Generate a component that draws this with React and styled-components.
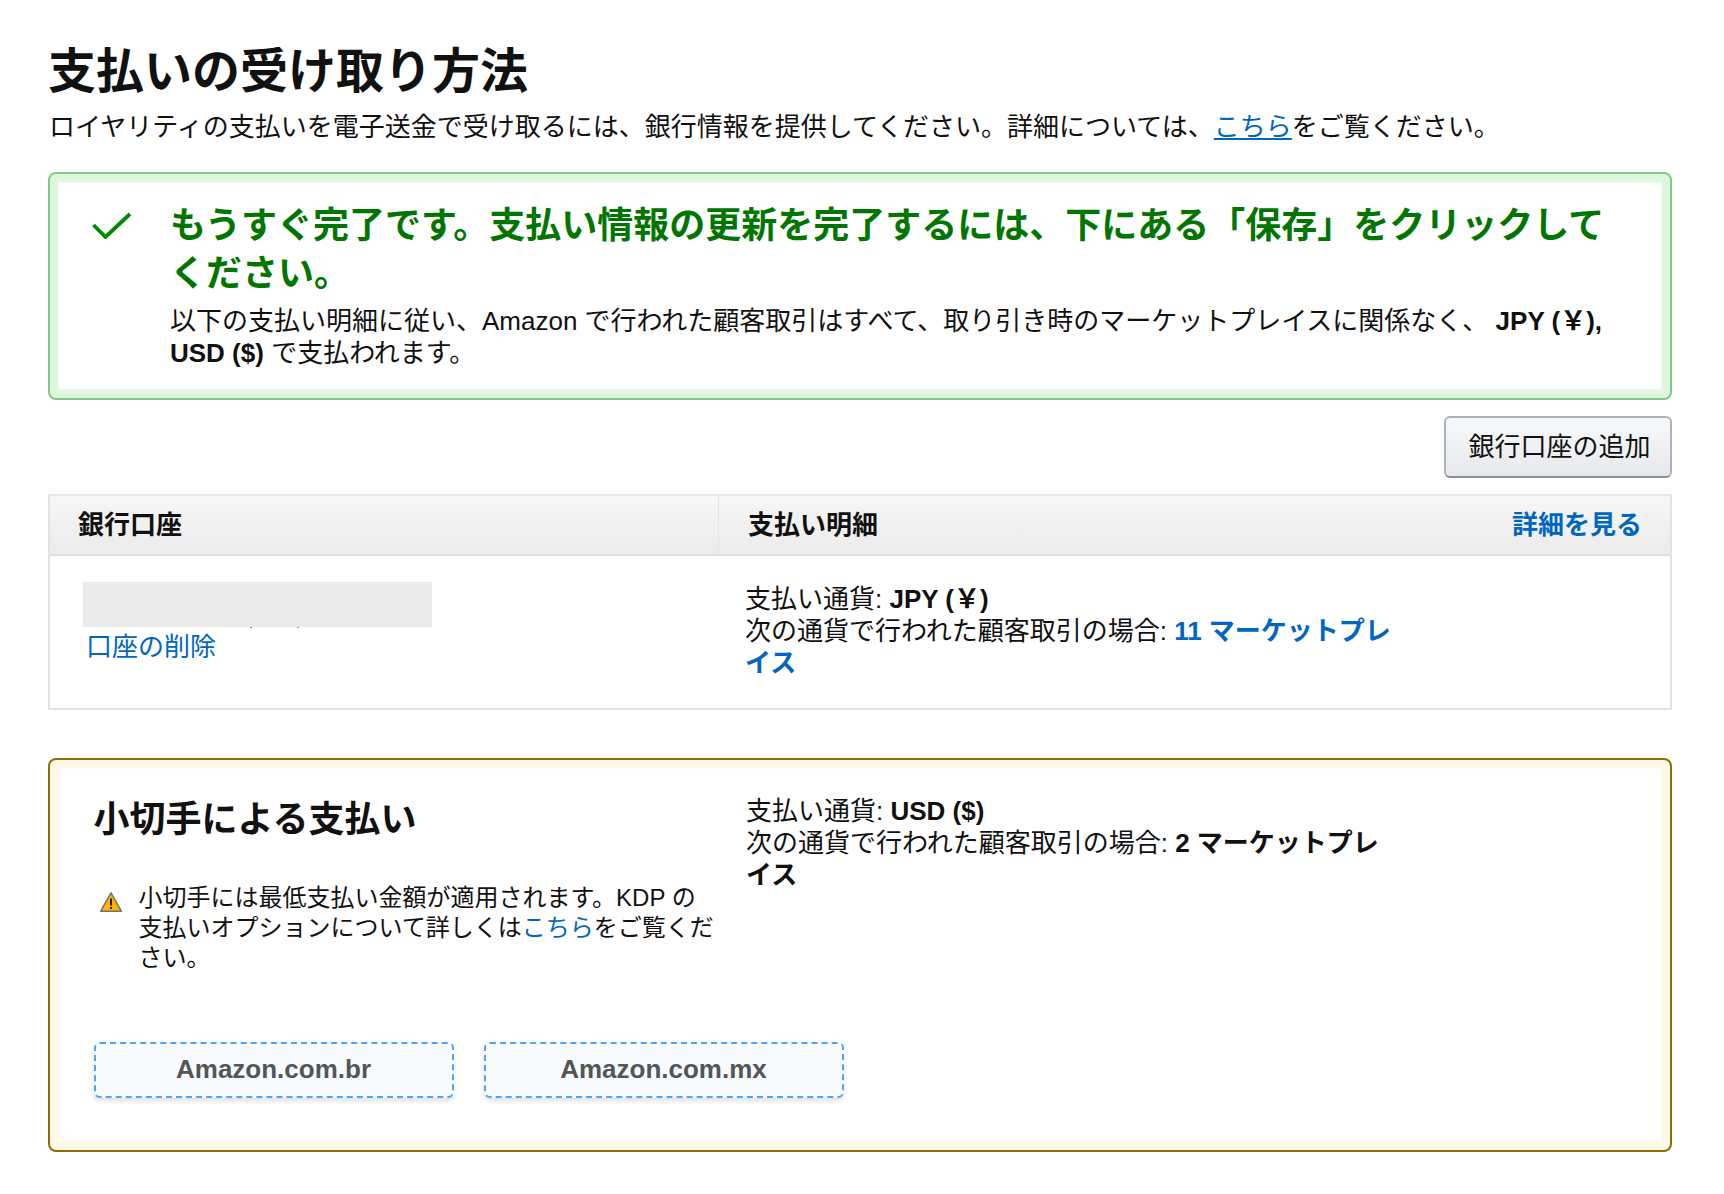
import React from 'react';
import styled, { createGlobalStyle } from 'styled-components';

const FONT = '"Liberation Sans", "Noto Sans CJK JP", sans-serif';
const BLUE = '#0066c0';

const GlobalStyle = createGlobalStyle`
  html, body { margin: 0; padding: 0; background: #fff; }
  body {
    font-family: ${FONT};
    font-size: 26px;
    line-height: 32px;
    color: #111;
  }
  * { box-sizing: border-box; }
`;

export default function App() {
  return (
    <Page>
      <GlobalStyle />
      <Title>支払いの受け取り方法</Title>
      <Intro>
        ロイヤリティの支払いを電子送金で受け取るには、銀行情報を提供してください。詳細については、
        <UnderLink href="#">こちら</UnderLink>をご覧ください。
      </Intro>

      <SuccessBox>
        <CheckIcon viewBox="0 0 39 27" fill="none">
          <path d="M1.5 13 L13.5 25 L38 2" stroke="#008a00" strokeWidth="3.8" />
        </CheckIcon>
        <SuccessBody>
          <SuccessHeading>
            もうすぐ完了です。支払い情報の更新を完了するには、下にある「保存」をクリックしてください。
          </SuccessHeading>
          <SuccessText>
            以下の支払い明細に従い、Amazon で行われた顧客取引はすべて、取り引き時のマーケットプレイスに関係なく、
            <b> JPY (￥), USD ($)</b> で支払われます。
          </SuccessText>
        </SuccessBody>
      </SuccessBox>

      <Toolbar>
        <AddButton>銀行口座の追加</AddButton>
      </Toolbar>

      <Table>
        <HeadRow>
          <HeadCell $first>銀行口座</HeadCell>
          <HeadCell>
            支払い明細
            <HeadLink href="#">詳細を見る</HeadLink>
          </HeadCell>
        </HeadRow>
        <BodyRow>
          <AccountCell>
            <Redacted />
            <RemoveLink href="#">口座の削除</RemoveLink>
          </AccountCell>
          <PayCell>
            支払い通貨: <b>JPY (￥)</b>
            <br />
            次の通貨で行われた顧客取引の場合: <StrongLink href="#">11 マーケットプレイス</StrongLink>
          </PayCell>
        </BodyRow>
      </Table>

      <CheckBox>
        <CheckTop>
          <CheckLeft>
            <CheckHeading>小切手による支払い</CheckHeading>
            <Notice>
              <WarnIcon viewBox="0 0 22 20">
                <path d="M11 .9 L21.3 19.2 H.7 Z" fill="#ffb400" stroke="#77716a" strokeWidth="1.5" strokeLinejoin="round" />
                <rect x="10" y="6.5" width="2" height="7" fill="#2b2416" />
                <rect x="10" y="15" width="2" height="2" fill="#2b2416" />
              </WarnIcon>
              <NoticeText>
                小切手には最低支払い金額が適用されます。KDP の支払いオプションについて詳しくは
                <PlainLink href="#">こちら</PlainLink>をご覧ください。
              </NoticeText>
            </Notice>
          </CheckLeft>
          <CheckRight>
            支払い通貨: <b>USD ($)</b>
            <br />
            次の通貨で行われた顧客取引の場合: <b>2 マーケットプレイス</b>
          </CheckRight>
        </CheckTop>
        <Markets>
          <MarketButton>Amazon.com.br</MarketButton>
          <MarketButton>Amazon.com.mx</MarketButton>
        </Markets>
      </CheckBox>
    </Page>
  );
}

const Page = styled.div`
  width: 1724px;
  padding: 44px 52px 42px 48px;
`;
const Title = styled.h1`
  margin: 0 0 11px;
  font-size: 48px;
  line-height: 56px;
  font-weight: 700;
`;
const Intro = styled.p`
  margin: 0 0 29px 1px;
`;
const UnderLink = styled.a`
  color: ${BLUE};
  text-decoration: underline;
`;
const PlainLink = styled.a`
  color: ${BLUE};
  text-decoration: none;
`;
const Notch = styled.div`
  border-radius: 8px;
  border: 2px solid;
`;
const SuccessBox = styled(Notch)`
  display: flex;
  height: 228px;
  padding: 28px 44px 0 41px;
  border-color: #82c886;
  box-shadow: inset 0 0 0 8.5px #dff6df;
`;
const CheckIcon = styled.svg`
  flex: none;
  width: 39px;
  height: 27px;
  margin: 10px 40px 0 1px;
`;
const SuccessBody = styled.div`
  flex: 1;
  margin-left: -1px;
`;
const SuccessHeading = styled.h2`
  margin: 0 0 7px;
  font-size: 36px;
  line-height: 48px;
  font-weight: 700;
  color: #007600;
`;
const SuccessText = styled.p`
  margin: 0;
`;
const Toolbar = styled.div`
  display: flex;
  justify-content: flex-end;
  margin: 16px 0;
`;
const AddButton = styled.button`
  width: 228px;
  height: 62px;
  padding: 0 0 0 3px;
  border: 2px solid #adb1b8;
  border-bottom-color: #8d9096;
  border-radius: 6px;
  background: linear-gradient(to bottom, #f7f8fa, #e7e9ec);
  font: inherit;
  color: #111;
`;
const Table = styled.div`
  border: 2px solid #e3e3e3;
  border-top-color: #e7e7e7;
`;
const HeadRow = styled.div`
  display: grid;
  grid-template-columns: 669px 1fr;
  height: 60px;
  border-bottom: 2px solid #ddd;
  background: linear-gradient(to bottom, #f7f7f7, #ebebeb);
`;
const HeadCell = styled.div`
  display: flex;
  align-items: center;
  justify-content: space-between;
  padding: 0 28px 0 ${p => (p.$first ? '28px' : '29px')};
  font-weight: 700;
  border-right: ${p => (p.$first ? '1px solid #e4e4e4' : 'none')};
`;
const HeadLink = styled.a`
  color: ${BLUE};
  text-decoration: none;
`;
const BodyRow = styled.div`
  display: grid;
  grid-template-columns: 669px 1fr;
  height: 152px;
`;
const AccountCell = styled.div`
  padding: 26px 0 0 33px;
`;
const Redacted = styled.div`
  width: 349px;
  height: 45px;
  background: #eaeaea;
  &::after {
    content: '';
    display: block;
    width: 2px;
    height: 1px;
    margin: 0 0 0 167px;
    position: relative;
    top: 45px;
    background: #888;
    box-shadow: 47px 0 #888;
  }
`;
const RemoveLink = styled.a`
  display: block;
  margin: 4px 0 0 3px;
  color: ${BLUE};
  text-decoration: none;
`;
const PayCell = styled.div`
  width: 677px;
  padding: 27px 0 0 26px;
`;
const StrongLink = styled.a`
  color: ${BLUE};
  font-weight: 700;
  text-decoration: none;
`;
const CheckBox = styled(Notch)`
  height: 394px;
  margin-top: 48px;
  padding: 35px 0 0 43.5px;
  border-color: #8c6e00;
  box-shadow: inset 0 0 0 8.5px #fef8e6;
`;
const CheckTop = styled.div`
  display: flex;
`;
const CheckLeft = styled.div`
  width: 652.5px;
  flex: none;
`;
const CheckRight = styled.div`
  width: 650px;
`;
const CheckHeading = styled.h2`
  margin: 1px 0 39px;
  font-size: 36px;
  line-height: 48px;
  font-weight: 700;
`;
const Notice = styled.div`
  display: flex;
  padding-left: 6px;
`;
const WarnIcon = styled.svg`
  flex: none;
  width: 22px;
  height: 20px;
  margin: 9px 17px 0 0;
`;
const NoticeText = styled.p`
  width: 578px;
  margin: 0;
  font-size: 24px;
  line-height: 30px;
`;
const Markets = styled.div`
  display: flex;
  gap: 30px;
  margin-top: 69px;
`;
const MarketButton = styled.div`
  width: 360px;
  height: 56px;
  padding-bottom: 2px;
  display: flex;
  align-items: center;
  justify-content: center;
  border: 2px dashed #4da6f5;
  border-radius: 6px;
  background: #f7fbfe;
  box-shadow: 0 3px 5px rgba(0, 0, 0, 0.12);
  font-weight: 700;
  color: #555;
`;
